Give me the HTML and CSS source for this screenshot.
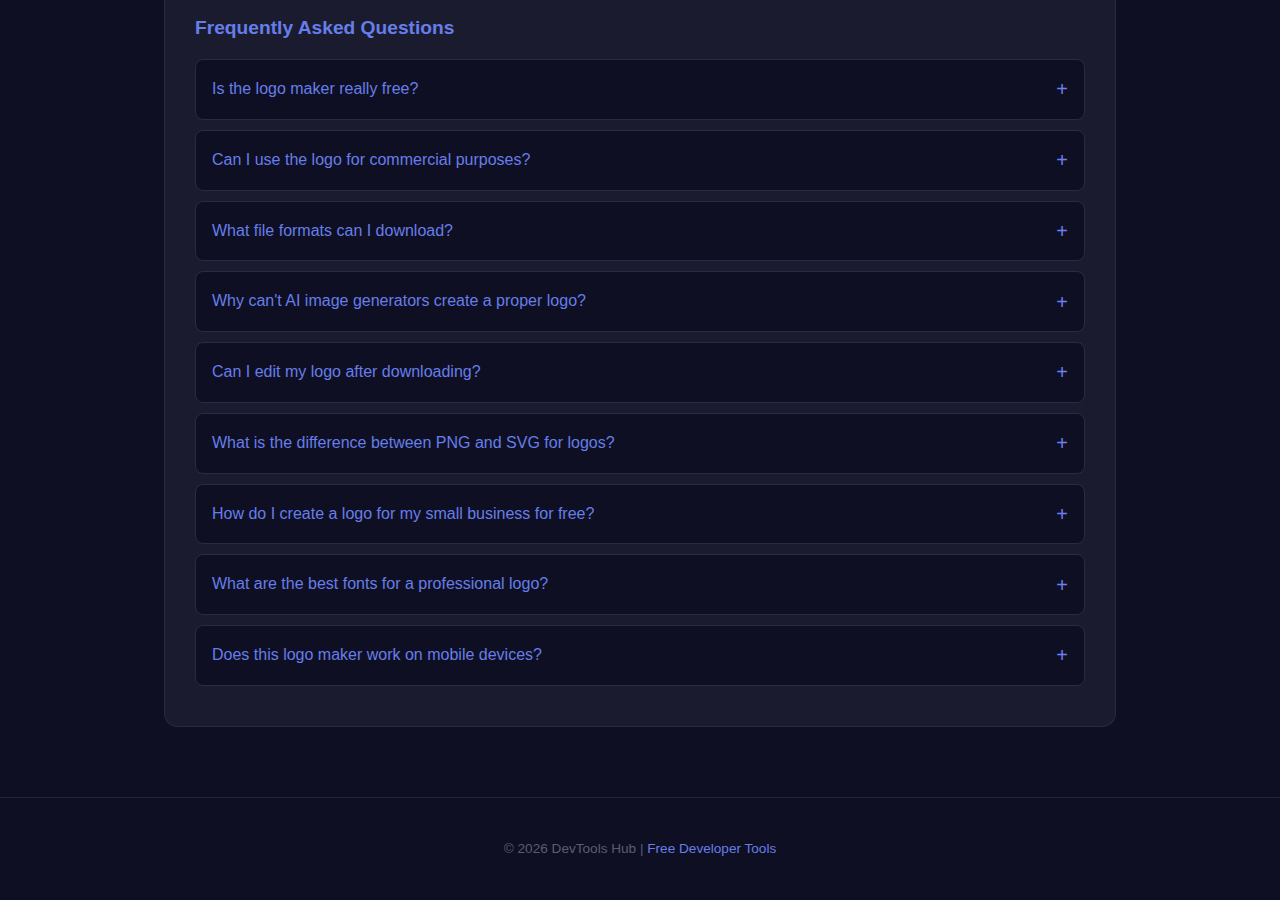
FILE: index.html
```html
<!DOCTYPE html>
<html lang="en">
<head>
    <meta charset="UTF-8">
    <meta name="viewport" content="width=device-width, initial-scale=1.0">
    <title>Free Logo Maker - FAQ</title>
    <link rel="stylesheet" href="styles.css">
</head>
<body>

    <main class="page">
        <section class="faq-card">
            <h2 class="faq-title">Frequently Asked Questions</h2>

            <div class="faq-item">
                <span class="faq-question">Is the logo maker really free?</span>
                <span class="faq-toggle">+</span>
            </div>
            <div class="faq-item">
                <span class="faq-question">Can I use the logo for commercial purposes?</span>
                <span class="faq-toggle">+</span>
            </div>
            <div class="faq-item">
                <span class="faq-question">What file formats can I download?</span>
                <span class="faq-toggle">+</span>
            </div>
            <div class="faq-item">
                <span class="faq-question">Why can't AI image generators create a proper logo?</span>
                <span class="faq-toggle">+</span>
            </div>
            <div class="faq-item">
                <span class="faq-question">Can I edit my logo after downloading?</span>
                <span class="faq-toggle">+</span>
            </div>
            <div class="faq-item">
                <span class="faq-question">What is the difference between PNG and SVG for logos?</span>
                <span class="faq-toggle">+</span>
            </div>
            <div class="faq-item">
                <span class="faq-question">How do I create a logo for my small business for free?</span>
                <span class="faq-toggle">+</span>
            </div>
            <div class="faq-item">
                <span class="faq-question">What are the best fonts for a professional logo?</span>
                <span class="faq-toggle">+</span>
            </div>
            <div class="faq-item">
                <span class="faq-question">Does this logo maker work on mobile devices?</span>
                <span class="faq-toggle">+</span>
            </div>
        </section>
    </main>

    <footer class="site-footer">
        <p>&copy; 2026 DevTools Hub | <a href="#">Free Developer Tools</a></p>
    </footer>

</body>
</html>
```

FILE: styles.css
```css
body {
    margin: 0;
    padding: 0;
    font-family: 'Liberation Sans', Arial, sans-serif;
    background: #0f0f23; /* Deep navy background */
    color: #667eea;
}

.page {
    display: flex;
    justify-content: center;
    padding-bottom: 70px;
}

.faq-card {
    width: 890px;
    padding: 0 30px 30px;
    background-color: #1b1b2f; /* Slightly lighter card */
    border: 1px solid #2a2a48;
    border-top: none;
    border-radius: 0 0 14px 14px;
}

.faq-title {
    margin: 16px 0 20px;
    font-size: 19.2px;
    line-height: 23px;
    font-weight: bold;
    color: #667eea;
}

.faq-item {
    display: flex;
    justify-content: space-between;
    align-items: center;
    margin-bottom: 10px;
    padding: 20px 16px;
    background-color: #0f0f23;
    border: 1px solid #2a2a48;
    border-radius: 8px;
    cursor: pointer;
}

.faq-question {
    font-size: 16px;
    line-height: 18.75px;
    color: #667eea;
}

.faq-toggle {
    font-size: 20px;
    line-height: 18px;
    color: #6b80f0;
}

.site-footer {
    border-top: 1px solid #22223a;
    padding: 40px 20px;
    text-align: center;
}

.site-footer p {
    margin: 0;
    font-size: 13.6px;
    line-height: 22px;
    color: #5c5c70;
}

.site-footer a {
    color: #667eea;
    text-decoration: none;
}
```
